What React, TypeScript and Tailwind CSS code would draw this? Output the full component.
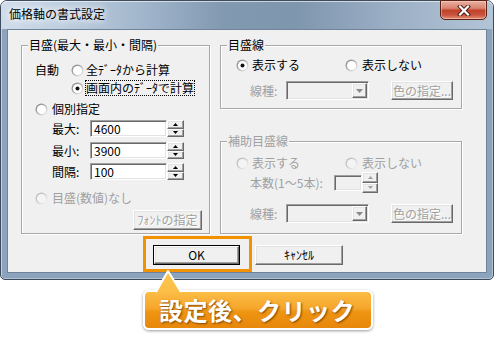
import React, { useId } from "react";

const sunken =
  "border border-t-[#a0a0a0] border-l-[#a0a0a0] border-b-white border-r-white shadow-[inset_1px_1px_0_#696969,inset_-1px_-1px_0_#e3e3e3]";
const raised =
  "border border-t-white border-l-white border-b-[#696969] border-r-[#696969] shadow-[inset_-1px_-1px_0_#a0a0a0,inset_1px_1px_0_#e3e3e3] bg-[#f0f0f0]";
const dis = "text-[#a0a0a0]";

function Radio({ checked = false, disabled = false }: { checked?: boolean; disabled?: boolean }) {
  const raw = useId();
  const id = "g" + raw.replace(/[^a-zA-Z0-9]/g, "");
  return (
    <svg width="13" height="13" viewBox="0 0 13 13" className="shrink-0">
      <defs>
        <linearGradient id={id} x1="0" y1="0" x2="1" y2="1">
          <stop offset="0" stopColor={disabled ? "#b4b4b4" : "#7c7c7c"} />
          <stop offset="0.55" stopColor={disabled ? "#d4d4d4" : "#b9b9b9"} />
          <stop offset="1" stopColor="#ffffff" />
        </linearGradient>
      </defs>
      <circle cx="6.5" cy="6.5" r="6" fill={`url(#${id})`} />
      <circle cx="6.5" cy="6.5" r="4.6" fill={disabled ? "#f4f4f4" : "#ffffff"} />
      {checked && <circle cx="6.5" cy="6.5" r="2" fill="#111" />}
    </svg>
  );
}

function Arrow({ up, disabled }: { up: boolean; disabled?: boolean }) {
  return (
    <svg width="5" height="3" viewBox="0 0 5 3">
      <polygon points={up ? "2.5,0 5,3 0,3" : "0,0 5,0 2.5,3"} fill={disabled ? "#a0a0a0" : "#000"} />
    </svg>
  );
}

function Spinner({ cls, disabled }: { cls: string; disabled?: boolean }) {
  return (
    <div className={`flex flex-col ${cls}`}>
      <div className={`${raised} flex-1 flex items-center justify-center`}>
        <Arrow up disabled={disabled} />
      </div>
      <div className={`${raised} flex-1 flex items-center justify-center`}>
        <Arrow up={false} disabled={disabled} />
      </div>
    </div>
  );
}

function NumInput({ value }: { value: string }) {
  return (
    <div className={`${sunken} bg-white w-[77px] h-[17px] flex items-center pl-[3px] text-[12px] leading-[14px]`}>
      {value}
    </div>
  );
}

function Dropdown() {
  return (
    <div className={`${sunken} bg-[#f0f0f0] w-[83px] h-[19px] flex items-center justify-end pr-[1px]`}>
      <div className={`${raised} w-[15px] h-[15px] flex items-center justify-center`}>
        <svg width="7" height="4" viewBox="0 0 7 4">
          <polygon points="0,0 7,0 3.5,4" fill="#8a8a8a" />
        </svg>
      </div>
    </div>
  );
}

function DisButton({ label, cls }: { label: string; cls: string }) {
  return (
    <div
      className={`${raised} ${cls} flex items-center justify-center ${dis} [text-shadow:1px_1px_0_#fff] text-[12px] leading-[14px] whitespace-nowrap`}
    >
      {label}
    </div>
  );
}

function GroupBox({
  label,
  disabled,
  cls,
  children,
}: {
  label: string;
  disabled?: boolean;
  cls: string;
  children: React.ReactNode;
}) {
  return (
    <div className={`relative border border-[#a8a8a8] shadow-[inset_1px_1px_0_#fff,1px_1px_0_#fff] ${cls}`}>
      <span
        className={`absolute left-[6px] -top-[9px] bg-[#f0f0f0] px-[1px] leading-[16px] whitespace-nowrap ${
          disabled ? dis : ""
        }`}
      >
        {label}
      </span>
      {children}
    </div>
  );
}

export default function App() {
  return (
    <div className="w-[494px] h-[339px] bg-white font-['Noto_Sans_CJK_JP',sans-serif] text-[12px] leading-[16px] text-black overflow-hidden">
      {/* Window */}
      <div className="w-[494px] h-[280px] rounded-t-[7px] rounded-b-[5px] border border-[#3e4b5b] bg-[#8ba3bd] flex flex-col px-[6px] pb-[6px] shadow-[inset_1px_1px_0_rgba(255,255,255,0.5),inset_-1px_-1px_0_rgba(255,255,255,0.35)]">
        {/* Title bar */}
        <div className="-mx-[6px] px-[7px] h-[28px] rounded-t-[6px] flex items-start justify-between bg-[linear-gradient(to_right,#d0dcea_0%,#bfcfe0_12%,#9fb4ca_30%,#8299b2_45%,#7f96af_60%,#9cb0c6_80%,#b3c4d6_100%)] shadow-[inset_0_1px_0_rgba(255,255,255,0.6)]">
          <span className="mt-[5px] pl-[1px] text-[12px] leading-[16px] text-black [text-shadow:0_0_6px_#fff,0_0_10px_#fff]">
            価格軸の書式設定
          </span>
          <div className="-mt-[1px] -mr-[1px] w-[47px] h-[20px] rounded-b-[5px] border border-[#5b2217] bg-[linear-gradient(to_bottom,#eab0a2_0%,#d98470_40%,#c2412b_52%,#c8543d_78%,#e39378_100%)] flex items-center justify-center shadow-[inset_0_0_0_1px_rgba(255,220,210,0.45)]">
            <svg width="14" height="11" viewBox="0 0 14 11">
              <path d="M3 1.5 L11 9.5 M11 1.5 L3 9.5" stroke="#4a1a12" strokeWidth="4" strokeLinecap="square" />
              <path d="M3 1.5 L11 9.5 M11 1.5 L3 9.5" stroke="#ffffff" strokeWidth="2.2" strokeLinecap="square" />
            </svg>
          </div>
        </div>

        {/* Client area */}
        <div className="flex-1 bg-[#f0f0f0] border border-[#6f8399] pl-[13px] pt-[15px] flex flex-col">
          <div className="flex">
            {/* Left group */}
            <GroupBox label="目盛(最大・最小・間隔)" cls="w-[189px] h-[189px]">
              <div className="pt-[16px] flex flex-col">
                <div className="h-[16px] flex items-center pl-[13px]">
                  <span className="w-[36px]">自動</span>
                  <Radio />
                  <span className="ml-[2px] whitespace-nowrap">全ﾃﾞｰﾀから計算</span>
                </div>
                <div className="mt-[2px] h-[16px] flex items-center pl-[49px]">
                  <Radio checked />
                  <span className="ml-[1px] border border-dotted border-black leading-[14px] whitespace-nowrap">
                    画面内のﾃﾞｰﾀで計算
                  </span>
                </div>
                <div className="mt-[5px] h-[16px] flex items-center pl-[13px]">
                  <Radio />
                  <span className="ml-[4px]">個別指定</span>
                </div>
                <div className="mt-[3px] h-[17px] flex items-center pl-[30px]">
                  <span className="w-[38px]">最大:</span>
                  <NumInput value="4600" />
                  <Spinner cls="w-[17px] h-[17px]" />
                </div>
                <div className="mt-[5px] h-[17px] flex items-center pl-[30px]">
                  <span className="w-[38px]">最小:</span>
                  <NumInput value="3900" />
                  <Spinner cls="w-[17px] h-[17px]" />
                </div>
                <div className="mt-[4px] h-[17px] flex items-center pl-[30px]">
                  <span className="w-[38px]">間隔:</span>
                  <NumInput value="100" />
                  <Spinner cls="w-[17px] h-[17px]" />
                </div>
                <div className="mt-[10px] h-[16px] flex items-center pl-[13px]">
                  <Radio disabled />
                  <span className={`ml-[4px] ${dis}`}>目盛(数値)なし</span>
                </div>
                <div className="mt-[4px] flex justify-end pr-[7px]">
                  <DisButton label="ﾌｫﾝﾄの指定" cls="w-[69px] h-[20px]" />
                </div>
              </div>
            </GroupBox>

            {/* Right column */}
            <div className="ml-[10px] w-[242px] flex flex-col">
              <GroupBox label="目盛線" cls="w-[242px] h-[64px]">
                <div className="pt-[11px] flex flex-col">
                  <div className="h-[16px] flex items-center pl-[15px]">
                    <div className="w-[109px] flex items-center">
                      <Radio checked />
                      <span className="ml-[3px]">表示する</span>
                    </div>
                    <Radio />
                    <span className="ml-[4px]">表示しない</span>
                  </div>
                  <div className="mt-[8px] h-[19px] flex items-center pl-[29px]">
                    <span className={`w-[36px] ${dis}`}>線種:</span>
                    <Dropdown />
                    <DisButton label="色の指定..." cls="ml-[22px] w-[62px] h-[19px]" />
                  </div>
                </div>
              </GroupBox>

              <GroupBox label="補助目盛線" disabled cls="mt-[32px] w-[242px] h-[93px]">
                <div className="pt-[13px] flex flex-col">
                  <div className="h-[16px] flex items-center pl-[15px]">
                    <div className="w-[109px] flex items-center">
                      <Radio disabled />
                      <span className={`ml-[3px] ${dis}`}>表示する</span>
                    </div>
                    <Radio disabled />
                    <span className={`ml-[4px] ${dis}`}>表示しない</span>
                  </div>
                  <div className="mt-[1px] h-[21px] flex items-center pl-[29px]">
                    <span className={`w-[84px] ${dis} whitespace-nowrap`}>本数(1〜5本):</span>
                    <div className={`${sunken} bg-[#f0f0f0] w-[28px] h-[16px]`} />
                    <Spinner cls="w-[16px] h-[21px]" disabled />
                  </div>
                  <div className="mt-[11px] h-[19px] flex items-center pl-[29px]">
                    <span className={`w-[36px] ${dis}`}>線種:</span>
                    <Dropdown />
                    <DisButton label="色の指定..." cls="ml-[22px] w-[62px] h-[19px]" />
                  </div>
                </div>
              </GroupBox>
            </div>
          </div>

          {/* Buttons */}
          <div className="mt-[11px] ml-[132px] flex">
            <div className="relative w-[87px] h-[20px]">
              <div className="w-full h-full border border-black">
                <div className={`${raised} w-full h-full flex items-center justify-center leading-[14px]`}>OK</div>
              </div>
              <div className="absolute -left-[10px] -top-[9px] w-[109px] h-[36px] border-[3px] border-[#f29200]" />
            </div>
            <div className={`${raised} ml-[15px] w-[88px] h-[20px] flex items-center justify-center leading-[14px]`}>
              ｷｬﾝｾﾙ
            </div>
          </div>
        </div>
      </div>

      {/* Callout */}
      <div className="relative ml-[143px] mt-[10px] w-[230px] h-[40px]">
        <div className="w-full h-full rounded-[6px] border-2 border-white bg-[linear-gradient(to_bottom,#fbbd45_0%,#f6a62c_45%,#ee9512_55%,#e8870b_100%)] shadow-[0_1px_3px_rgba(0,0,0,0.4)] flex items-center pl-[14px] text-white font-bold text-[24px] leading-[28px] tracking-[0.5px] [text-shadow:1px_1px_2px_rgba(110,55,0,0.85)] whitespace-nowrap">
          設定後、クリック
        </div>
        <svg width="32" height="28" viewBox="0 0 32 28" className="absolute left-[10px] -top-[22px]">
          <defs>
            <linearGradient id="triFill" x1="0" y1="0" x2="0" y2="1">
              <stop offset="0" stopColor="#fcc650" />
              <stop offset="1" stopColor="#fbbd45" />
            </linearGradient>
          </defs>
          <polygon points="15,3 28,24.5 3,24.5" fill="url(#triFill)" />
          <polyline points="3,24 15,3 28,24" fill="none" stroke="#ffffff" strokeWidth="2" strokeLinejoin="round" />
        </svg>
      </div>
    </div>
  );
}
